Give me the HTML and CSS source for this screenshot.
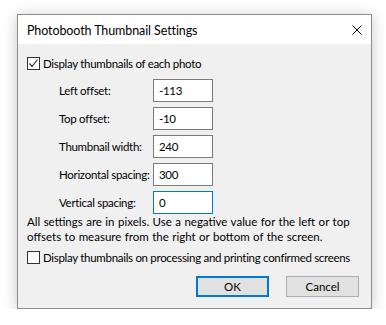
FILE: index.html
```html
<!DOCTYPE html>
<html>
<head>
<meta charset="utf-8">
<link rel="stylesheet" href="styles.css">
</head>
<body>
<div class="window">
  <div class="titlebar">
    <span class="title">Photobooth Thumbnail Settings</span>
    <svg class="close" width="10" height="10" viewBox="0 0 10 10"><path d="M0.5 0.5 L9.5 9.5 M9.5 0.5 L0.5 9.5" stroke="#000" stroke-width="1" fill="none"/></svg>
  </div>
  <div class="content">
    <label class="check-row first">
      <span class="box"><svg width="11" height="11" viewBox="0 0 11 11"><path d="M1.5 5.5 L4 8.5 L9.5 1.5" stroke="#333" stroke-width="1.2" fill="none"/></svg></span>
      <span>Display thumbnails of each photo</span>
    </label>
    <div class="form">
      <span class="lbl">Left offset:</span><span class="field">-113</span>
      <span class="lbl">Top offset:</span><span class="field">-10</span>
      <span class="lbl">Thumbnail width:</span><span class="field">240</span>
      <span class="lbl">Horizontal spacing:</span><span class="field">300</span>
      <span class="lbl">Vertical spacing:</span><span class="field focus">0</span>
    </div>
    <p class="note">All settings are in pixels. Use a negative value for the left or top offsets to measure from the right or bottom of the screen.</p>
    <label class="check-row second">
      <span class="box"></span>
      <span>Display thumbnails on processing and printing confirmed screens</span>
    </label>
    <div class="buttons">
      <span class="btn default">OK</span>
      <span class="btn">Cancel</span>
    </div>
  </div>
</div>
</body>
</html>
```
FILE: styles.css
```css
html, body {
  margin: 0;
  padding: 0;
  background: #ffffff;
}
body {
  padding: 14px 0 0 17px;
  font-family: Lato, "Noto Sans", sans-serif;
  font-size: 11.5px;
  letter-spacing: -0.3px;
  color: #000;
}
.window {
  width: 353px;
  height: 293px;
  border: 1px solid #8c8c8c;
  background: #f0f0f0;
  box-shadow: 0 2px 14px rgba(0, 0, 0, 0.22);
  display: flex;
  flex-direction: column;
}
.titlebar {
  height: 29px;
  background: #ffffff;
  display: flex;
  align-items: center;
  justify-content: space-between;
  padding: 0 9px 0 9px;
}
.title {
  font-size: 12.5px;
  letter-spacing: -0.1px;
  margin-top: 1px;
}
.close {
  display: block;
  margin-top: 1px;
}
.content {
  padding: 0 12px 0 9px;
  display: flex;
  flex-direction: column;
  white-space: nowrap;
}
.check-row {
  display: flex;
  align-items: center;
  height: 13px;
  gap: 3px;
}
.check-row.first {
  margin-top: 13px;
}
.box {
  width: 11px;
  height: 11px;
  border: 1px solid #333;
  background: #fff;
  display: flex;
  align-items: center;
  justify-content: center;
  flex: none;
}
.form {
  display: grid;
  grid-template-columns: 94px 60px;
  grid-auto-rows: 23px;
  row-gap: 5px;
  margin: 9px 0 0 32px;
  align-items: center;
}
.field {
  box-sizing: border-box;
  height: 23px;
  border: 1px solid #7a7a7a;
  background: #fff;
  padding: 0 5px;
  display: flex;
  align-items: center;
}
.field.focus {
  border-color: #0078d7;
}
.note {
  margin: 0;
  line-height: 15px;
  white-space: normal;
  letter-spacing: 0;
  word-spacing: 0.5px;
}
.check-row.second {
  margin-top: 7px;
}
.buttons {
  display: flex;
  justify-content: flex-end;
  gap: 17px;
  margin-top: 12px;
}
.btn {
  box-sizing: border-box;
  width: 73px;
  height: 21px;
  border: 1px solid #adadad;
  background: #e1e1e1;
  display: flex;
  align-items: center;
  justify-content: center;
  letter-spacing: 0;
}
.btn.default {
  border: 2px solid #0078d7;
}
```
